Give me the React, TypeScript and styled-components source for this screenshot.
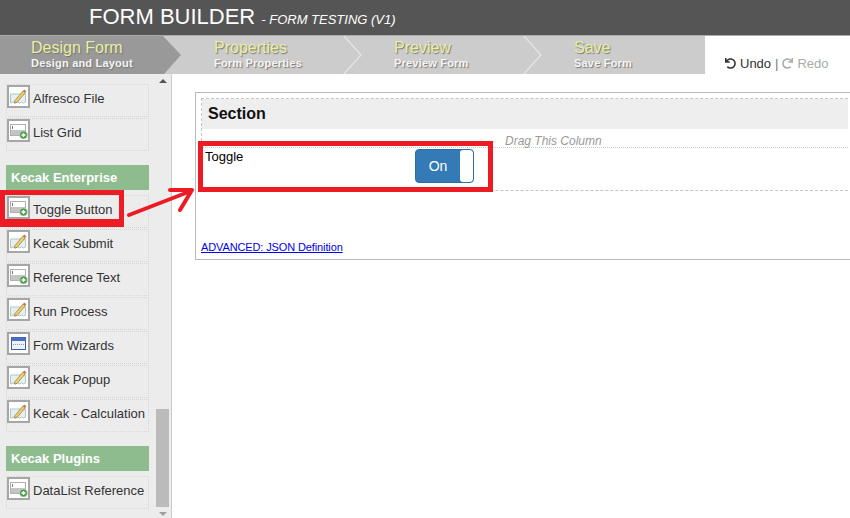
import React from "react";
import styled, { createGlobalStyle } from "styled-components";
import { FaUndo, FaRedo } from "react-icons/fa";

const GlobalStyle = createGlobalStyle`
  html, body {
    margin: 0;
    padding: 0;
    height: 100%;
    overflow: hidden;
    background: #fff;
    font-family: "Liberation Sans", Arial, sans-serif;
  }
`;

type Item = { label: string; icon: "edit" | "select" | "wizard" };

const topItems: Item[] = [
  { label: "Alfresco File", icon: "edit" },
  { label: "List Grid", icon: "select" },
];

const enterpriseItems: Item[] = [
  { label: "Toggle Button", icon: "select" },
  { label: "Kecak Submit", icon: "edit" },
  { label: "Reference Text", icon: "select" },
  { label: "Run Process", icon: "edit" },
  { label: "Form Wizards", icon: "wizard" },
  { label: "Kecak Popup", icon: "edit" },
  { label: "Kecak - Calculation", icon: "edit" },
];

const pluginItems: Item[] = [{ label: "DataList Reference", icon: "select" }];

const steps = [
  { title: "Design Form", sub: "Design and Layout", active: true },
  { title: "Properties", sub: "Form Properties", active: false },
  { title: "Preview", sub: "Preview Form", active: false },
  { title: "Save", sub: "Save Form", active: false },
];

const ElementIcon = ({ type }: { type: Item["icon"] }) => {
  if (type === "edit") {
    return (
      <svg width="19" height="19" viewBox="0 0 19 19">
        <path d="M1.5 7h15v8l-2 1-2-1-2 1-2-1-2 1-2-1-3 1z" fill="#e4f0f2" stroke="#b4c6c8" strokeWidth="1" />
        <path d="M6 13.5l8-9.5 2.2 1.8-8 9.5-3 .8z" fill="#f3cf62" stroke="#8a7440" strokeWidth="0.7" />
        <path d="M14 4l1.2-1.5 2.2 1.8-1.2 1.5z" fill="#c9705a" />
      </svg>
    );
  }
  if (type === "wizard") {
    return (
      <svg width="19" height="19" viewBox="0 0 19 19">
        <rect x="2.5" y="3.5" width="14" height="12" fill="#eef0fa" stroke="#3f5fa8" />
        <rect x="2.5" y="3.5" width="14" height="3.5" fill="#4a6fc0" />
        <path d="M4 10.5h11" stroke="#8a96ad" strokeDasharray="1 1" />
      </svg>
    );
  }
  return (
    <svg width="19" height="19" viewBox="0 0 19 19">
      <rect x="1.5" y="3.5" width="15" height="11" fill="#fff" stroke="#b0b0b0" />
      <rect x="2" y="9" width="14" height="5" fill="#c4c4c4" />
      <path d="M3.5 5v3" stroke="#777" />
      <circle cx="14.5" cy="14" r="4" fill="#4f9a4f" stroke="#d8e8d8" strokeWidth="0.6" />
      <path d="M12.5 14h4M14.5 12v4" stroke="#fff" strokeWidth="1.4" />
    </svg>
  );
};

const PaletteList = ({ items }: { items: Item[] }) => (
  <ItemList>
    {items.map((item) => (
      <PaletteItem key={item.label}>
        <IconFrame>
          <ElementIcon type={item.icon} />
        </IconFrame>
        <ItemLabel>{item.label}</ItemLabel>
      </PaletteItem>
    ))}
  </ItemList>
);

const App = () => {
  return (
    <Page>
      <GlobalStyle />
      <Header>
        <Title>FORM BUILDER</Title>
        <Subtitle>- FORM TESTING (V1)</Subtitle>
      </Header>
      <StepBar>
        <Steps>
          {steps.map((step, i) => (
            <Step key={step.title} $active={step.active}>
              <StepTitle>{step.title}</StepTitle>
              <StepSub>{step.sub}</StepSub>
              {!step.active && i < steps.length - 1 && (
                <Chevron width="20" height="38" viewBox="0 0 20 38">
                  <path d="M1 0l17 19L1 38" fill="none" stroke="#e6e6e6" strokeWidth="1.2" />
                </Chevron>
              )}
            </Step>
          ))}
        </Steps>
        <UndoRedo>
          <FaUndo size={11} />
          <span>Undo</span>
          <Sep>|</Sep>
          <Redo>
            <FaRedo size={11} />
            <span>Redo</span>
          </Redo>
        </UndoRedo>
      </StepBar>
      <Body>
        <Sidebar>
          <PaletteList items={topItems} />
          <GroupTitle>Kecak Enterprise</GroupTitle>
          <PaletteList items={enterpriseItems} />
          <GroupTitle>Kecak Plugins</GroupTitle>
          <PaletteList items={pluginItems} />
          <ScrollTrack>
            <ArrowUp />
            <ScrollThumb />
            <ArrowDown />
          </ScrollTrack>
        </Sidebar>
        <Canvas>
          <FormPanel>
            <SectionBox>
              <SectionTitle>Section</SectionTitle>
              <DragHint>Drag This Column</DragHint>
              <FieldRow>
                <FieldLabel>Toggle</FieldLabel>
                <Toggle>
                  <ToggleOn>On</ToggleOn>
                  <ToggleHandle />
                </Toggle>
              </FieldRow>
            </SectionBox>
            <JsonLink href="#">ADVANCED: JSON Definition</JsonLink>
          </FormPanel>
        </Canvas>
      </Body>
      <RedBox $x={0} $y={190} $w={124} $h={37} $bottom={8} />
      <RedBox $x={198} $y={141} $w={295} $h={51} $bottom={5} />
      <ArrowOverlay width="80" height="40" viewBox="0 0 80 40">
        <path
          d="M2 33L64 9M43 8l22 0-12 20"
          fill="none"
          stroke="#ed1c24"
          strokeWidth="4"
          strokeLinecap="round"
          strokeLinejoin="round"
        />
      </ArrowOverlay>
    </Page>
  );
};

export default App;

const Page = styled.div`
  position: relative;
  width: 850px;
  height: 518px;
  overflow: hidden;
  background: #fff;
`;

const Header = styled.div`
  height: 35px;
  background: #555;
  border-bottom: 1px solid #aaa;
  padding-left: 89px;
  display: flex;
  align-items: baseline;
  gap: 6px;
  color: #fff;
`;

const Title = styled.div`
  font-size: 22px;
  line-height: 33px;
`;

const Subtitle = styled.div`
  font-size: 13px;
  font-style: italic;
`;

const StepBar = styled.div`
  height: 38px;
  display: flex;
`;

const Steps = styled.div`
  width: 705px;
  display: flex;
  background: #ccc;
`;

const Step = styled.div<{ $active: boolean }>`
  position: relative;
  width: ${(p) => (p.$active ? "182px" : "180px")};
  margin-right: ${(p) => (p.$active ? "-18px" : "0")};
  padding: 3px 0 0 ${(p) => (p.$active ? "31px" : "50px")};
  box-sizing: border-box;
  flex: none;
  background: ${(p) => (p.$active ? "#999" : "transparent")};
  clip-path: ${(p) =>
    p.$active ? "polygon(0 0, 163px 0, 181px 19px, 164px 38px, 0 38px)" : "none"};
`;

const StepTitle = styled.div`
  font-size: 16px;
  line-height: 18px;
  color: #e6f0a0;
  text-shadow: 1px 1px 1px #777;
`;

const StepSub = styled.div`
  font-size: 11px;
  font-weight: bold;
  line-height: 13px;
  letter-spacing: 0.2px;
  color: #f5f5f5;
  text-shadow: 1px 1px 1px #777;
`;

const Chevron = styled.svg`
  position: absolute;
  top: 0;
  left: 179px;
`;

const UndoRedo = styled.div`
  flex: 1;
  background: #fff;
  display: flex;
  align-items: center;
  gap: 4px;
  padding: 17px 0 0 20px;
  box-sizing: border-box;
  font-size: 13px;
  color: #333;
`;

const Sep = styled.span`
  color: #777;
`;

const Redo = styled.span`
  display: flex;
  align-items: center;
  gap: 4px;
  color: #aaa;
`;

const Body = styled.div`
  display: flex;
  height: 444px;
`;

const Sidebar = styled.div`
  position: relative;
  width: 172px;
  flex: none;
  box-sizing: border-box;
  background: #ececec;
  border-right: 1px solid #ccc;
  padding: 10px 22px 0 6px;
  overflow: hidden;
`;

const ItemList = styled.div`
  display: flex;
  flex-direction: column;
  gap: 1px;
`;

const PaletteItem = styled.div`
  height: 33px;
  box-sizing: border-box;
  border: 1px dotted #d6d6d6;
  display: flex;
  align-items: flex-start;
  gap: 3px;
  font-size: 13px;
  color: #333;
  white-space: nowrap;
`;

const ItemLabel = styled.span`
  line-height: 16px;
  margin-top: 6px;
`;

const IconFrame = styled.div`
  width: 23px;
  height: 23px;
  box-sizing: border-box;
  border: 2px solid #a6a6a6;
  background: #fff;
  display: flex;
  align-items: center;
  justify-content: center;
  flex: none;
`;

const GroupTitle = styled.div`
  height: 25px;
  margin: 14px 0 5px;
  padding-left: 5px;
  background: #8fbc8f;
  color: #fff;
  font-size: 13px;
  font-weight: bold;
  line-height: 25px;
`;

const ScrollTrack = styled.div`
  position: absolute;
  top: 0;
  right: 1px;
  bottom: 0;
  width: 15px;
  display: flex;
  flex-direction: column;
  align-items: center;
`;

const ScrollThumb = styled.div`
  width: 13px;
  height: 98px;
  margin-top: auto;
  margin-bottom: 5px;
  background: #bbb;
`;

const ArrowUp = styled.div`
  margin-top: 5px;
  border-left: 4px solid transparent;
  border-right: 4px solid transparent;
  border-bottom: 4px solid #555;
`;

const ArrowDown = styled.div`
  margin-bottom: 2px;
  border-left: 4px solid transparent;
  border-right: 4px solid transparent;
  border-top: 4px solid #a0a0a0;
`;

const Canvas = styled.div`
  flex: 1;
  padding: 18px 0 0 23px;
  min-width: 0;
`;

const FormPanel = styled.div`
  height: 168px;
  box-sizing: border-box;
  margin-right: -4px;
  border: 1px solid #bbb;
  padding: 5px 5px 0;
  display: flex;
  flex-direction: column;
`;

const SectionBox = styled.div`
  height: 93px;
  box-sizing: border-box;
  border: 1px dashed #c4c4c4;
  border-right: none;
  display: flex;
  flex-direction: column;
`;

const SectionTitle = styled.div`
  height: 30px;
  flex: none;
  background: #eee;
  padding-left: 6px;
  font-size: 16px;
  font-weight: bold;
  line-height: 29px;
  color: #111;
`;

const DragHint = styled.div`
  height: 19px;
  flex: none;
  box-sizing: border-box;
  padding-left: 303px;
  border-bottom: 1px dotted #ccc;
  font-size: 12px;
  font-style: italic;
  line-height: 25px;
  color: #999;
`;

const FieldRow = styled.div`
  position: relative;
  display: flex;
  padding: 1px 0 0 3px;
`;

const FieldLabel = styled.div`
  width: 210px;
  font-size: 13px;
  line-height: 16px;
  color: #000;
`;

const Toggle = styled.div`
  width: 59px;
  height: 34px;
  box-sizing: border-box;
  border: 1px solid #2e6da4;
  border-radius: 4px;
  background: #337ab7;
  display: flex;
  overflow: hidden;
`;

const ToggleOn = styled.div`
  flex: 1;
  color: #fff;
  font-size: 14px;
  line-height: 32px;
  text-align: center;
`;

const ToggleHandle = styled.div`
  width: 13px;
  background: #fff;
  border-radius: 3px;
`;

const JsonLink = styled.a`
  margin-top: 50px;
  font-size: 11px;
  line-height: 13px;
  letter-spacing: -0.12px;
  color: #00e;
`;

const RedBox = styled.div<{ $x: number; $y: number; $w: number; $h: number; $bottom: number }>`
  position: absolute;
  left: ${(p) => p.$x}px;
  top: ${(p) => p.$y}px;
  width: ${(p) => p.$w}px;
  height: ${(p) => p.$h}px;
  box-sizing: border-box;
  border: 5px solid #ed1c24;
  border-bottom-width: ${(p) => p.$bottom}px;
`;

const ArrowOverlay = styled.svg`
  position: absolute;
  left: 127px;
  top: 182px;
`;
